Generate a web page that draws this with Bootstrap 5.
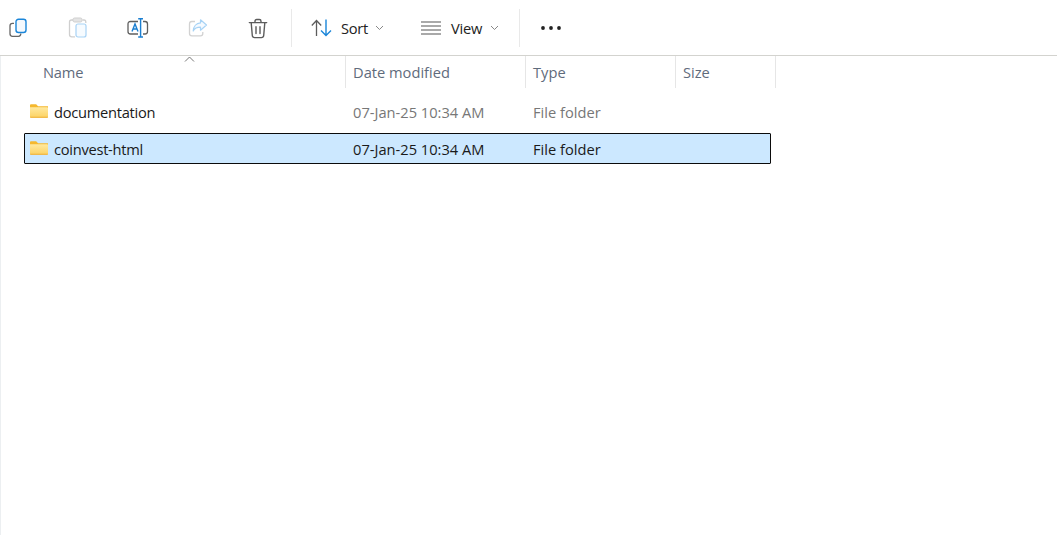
<!DOCTYPE html>
<html lang="en">
<head>
<meta charset="utf-8">
<title>Explorer</title>
<link rel="stylesheet" href="https://cdn.jsdelivr.net/npm/bootstrap@5.3.0/dist/css/bootstrap.min.css">
<style>
html,body{height:535px;overflow:hidden;background:#fff}
body{font-family:"Open Sans","Noto Sans","Liberation Sans",sans-serif;font-size:14.67px;color:#1a1a1a;line-height:20px}
.ex-shell{height:535px;position:relative}
.ex-edge{box-shadow:inset 1px 0 0 #eceff1}
.ex-bar{height:56px;border-bottom:1px solid #d3d3cf;background:#fff;padding-top:9px;padding-bottom:8px}
.ex-ico{width:60px;height:38px;flex:none}
.ex-ico svg{display:block}
.ex-first{margin-left:-12px}
.ex-sep{width:1px;height:38px;background:#e9e9e9;flex:none}
.ex-sep-a{margin-left:3px}
.ex-sort{width:108px;height:38px;padding-left:19px;gap:8px;flex:none}
.ex-view{width:119px;height:38px;padding-left:21px;gap:8px;flex:none}
.ex-more{width:62px;height:38px;flex:none}
.ex-lbl{letter-spacing:-.25px;color:#222}
.ex-lbl-s{margin-left:1px;margin-right:-1px}
.ex-lbl-v{margin-left:2px}
.ex-head{height:32px;color:#5f6b7c;width:776px;position:relative}
.ex-hc{border-right:1px solid #e6e6e6;height:32px;padding-left:7px;flex:none;padding-top:6px}
.ex-c1{width:346px;padding-left:43px;letter-spacing:-.2px}
.ex-c2{width:180px}
.ex-c3{width:150px}
.ex-c4{width:100px}
.ex-caret{position:absolute;left:184px;top:0}
.ex-rows{margin-left:24px;width:747px;padding-top:8px;gap:6px}
.ex-row{height:31px;padding-left:29px;color:#777;border:1px solid transparent}
.ex-name{width:299px;color:#1a1a1a;letter-spacing:-.27px;flex:none;position:relative}
.ex-name svg{position:absolute;left:-24px;top:1px}
.ex-date{width:180px;flex:none}
.ex-type{flex:none}
.ex-sel{background:#cce8ff;border-color:#0b0b0b;color:#1a1a1a;border-radius:1px}
.ex-defs{width:0;height:0;position:absolute}
</style>
</head>
<body>
<div class="ex-shell ex-edge">
  <div class="ex-bar d-flex align-items-center">
    <div class="ex-ico ex-first d-flex align-items-center justify-content-center">
      <svg width="20" height="20" viewBox="0 0 20 20" fill="none"><path d="M6 5.300H4.500Q2 5.300 2 7.800V15.800Q2 18.300 4.500 18.300H10.500Q12.800 18.300 12.800 15.500" stroke="#666" stroke-width="1.300"/><rect x="8" y="1.200" width="10" height="13.300" rx="2.500" fill="#f4f9fe" stroke="#1b86d9" stroke-width="1.400"/></svg>
    </div>
    <div class="ex-ico d-flex align-items-center justify-content-center">
      <svg width="20" height="22" viewBox="0 0 20 22" fill="none"><path d="M5 3H3.500Q1.500 3 1.500 5V17.500Q1.500 19.800 3.800 19.800H7" stroke="#cfcfcf" stroke-width="1.300"/><path d="M14.500 3H16Q17.800 3 17.800 5V6" stroke="#cfcfcf" stroke-width="1.300"/><rect x="5" y="1" width="9" height="4" rx="1.500" fill="#e4e4e4" stroke="#cfcfcf"/><rect x="8" y="7" width="10" height="13" rx="2" fill="#f6fbff" stroke="#a8d3f5" stroke-width="1.200"/></svg>
    </div>
    <div class="ex-ico d-flex align-items-center justify-content-center">
      <svg width="22" height="20" viewBox="0 0 22 20" fill="none"><path d="M11 3.500H3.500Q1 3.500 1 6V13.500Q1 16 3.500 16H11" stroke="#5f5f5f" stroke-width="1.300"/><path d="M16 3.500H18Q20.500 3.500 20.500 6V13.500Q20.500 16 18 16H16" stroke="#5f5f5f" stroke-width="1.300"/><path d="M5 13.500 8 6 11 13.500M6.100 11H9.900" stroke="#1b7fd1" stroke-width="1.400"/><path d="M13.600.8V19M11.200.8H16M11.200 19H16" stroke="#1b7fd1" stroke-width="1.400"/></svg>
    </div>
    <div class="ex-ico d-flex align-items-center justify-content-center">
      <svg width="20" height="20" viewBox="0 0 20 20" fill="none"><path d="M7 3.500H3.800Q1.500 3.500 1.500 5.800V15.500Q1.500 17.800 3.800 17.800H12.500Q14.800 17.800 14.800 15.500V14" stroke="#d2d2d2" stroke-width="1.300"/><path d="M12.500 1.800 18.500 7 12.500 12.200V9.200C9 9.200 6.500 10.500 5.200 13 5.500 8.800 8.200 5.200 12.500 4.900Z" fill="#f5faff" stroke="#a8d3f5" stroke-width="1.200" stroke-linejoin="round"/></svg>
    </div>
    <div class="ex-ico d-flex align-items-center justify-content-center">
      <svg width="20" height="21" viewBox="0 0 20 21" fill="none"><path d="M1.300 4.600H18.700M7 4.500V3.200Q7 1.500 8.700 1.500H11.300Q13 1.500 13 3.200V4.500M3.200 4.800 4.300 17.500Q4.500 19.600 6.600 19.600H13.400Q15.500 19.600 15.700 17.500L16.800 4.800M8 8.800V15.500M12 8.800V15.500" stroke="#5c5c5c" stroke-width="1.400" stroke-linecap="round"/></svg>
    </div>
    <div class="ex-sep ex-sep-a"></div>
    <div class="ex-sort d-flex align-items-center">
      <svg width="21" height="18" viewBox="0 0 21 18" fill="none"><path d="M5.500 17V1.500M.8 6.500 5.500 1.500 10.200 6.500" stroke="#5c5c5c" stroke-width="1.300"/><path d="M15 .5V16.500M10 11.500 15 16.500 20 11.500" stroke="#1b86d9" stroke-width="1.400"/></svg>
      <span class="ex-lbl ex-lbl-s">Sort</span>
      <svg width="9" height="6" viewBox="0 0 9 6" fill="none"><path d="M1 1 4.500 4.500 8 1" stroke="#888" stroke-width="1"/></svg>
    </div>
    <div class="ex-view d-flex align-items-center">
      <svg width="20" height="14" viewBox="0 0 20 14" fill="none"><path d="M0 1H20M0 5H20M0 9H20M0 13H20" stroke="#555" stroke-width="1.200"/></svg>
      <span class="ex-lbl ex-lbl-v">View</span>
      <svg width="9" height="6" viewBox="0 0 9 6" fill="none"><path d="M1 1 4.500 4.500 8 1" stroke="#888" stroke-width="1"/></svg>
    </div>
    <div class="ex-sep"></div>
    <div class="ex-more d-flex align-items-center justify-content-center">
      <svg width="20" height="4" viewBox="0 0 20 4"><circle cx="2" cy="2" r="1.900" fill="#222"/><circle cx="10" cy="2" r="1.900" fill="#222"/><circle cx="18" cy="2" r="1.900" fill="#222"/></svg>
    </div>
  </div>
  <div class="ex-head d-flex">
    <svg class="ex-caret" width="11" height="6" viewBox="0 0 11 6" fill="none"><path d="M1 5.500 5.500 1 10 5.500" stroke="#777" stroke-width="1"/></svg>
    <div class="ex-hc ex-c1">Name</div>
    <div class="ex-hc ex-c2">Date modified</div>
    <div class="ex-hc ex-c3">Type</div>
    <div class="ex-hc ex-c4">Size</div>
  </div>
  <div class="ex-rows d-flex flex-column">
    <div class="ex-row d-flex align-items-center">
      <div class="ex-name">documentation<svg width="18" height="16" viewBox="0 0 19 16"><use href="#ex-folder"/></svg></div>
      <div class="ex-date">07-Jan-25 10:34 AM</div>
      <div class="ex-type">File folder</div>
    </div>
    <div class="ex-row ex-sel d-flex align-items-center">
      <div class="ex-name">coinvest-html<svg width="18" height="16" viewBox="0 0 19 16"><use href="#ex-folder"/></svg></div>
      <div class="ex-date">07-Jan-25 10:34 AM</div>
      <div class="ex-type">File folder</div>
    </div>
  </div>
</div>
<svg class="ex-defs"><defs>
  <linearGradient id="ex-g" x1="0" y1="0" x2="0" y2="1"><stop offset="0" stop-color="#ffe9a0"/><stop offset="1" stop-color="#fcd262"/></linearGradient>
  <g id="ex-folder"><path d="M0 2Q0 1 1 1H6.500L8.500 3H19V5H0Z" fill="#f5b82e"/><path d="M0 4H18Q19 4 19 5V14Q19 15 18 15H1Q0 15 0 14Z" fill="url(#ex-g)"/><path d="M0 14.200H19V14.500Q19 15 18 15H1Q0 15 0 14.500Z" fill="#eeb038"/></g>
</defs></svg>
<script src="https://cdn.jsdelivr.net/npm/bootstrap@5.3.0/dist/js/bootstrap.bundle.min.js"></script>
</body>
</html>
